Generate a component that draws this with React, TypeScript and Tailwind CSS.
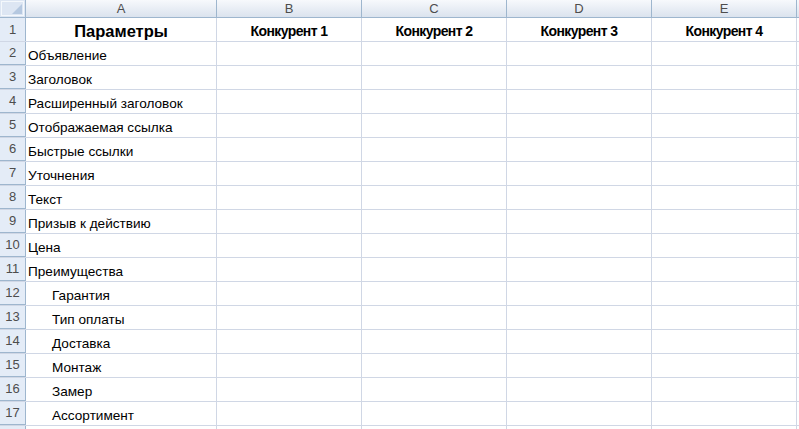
const cols = ["A", "B", "C", "D", "E"];
const widths = ["w-[191px]", "w-[145px]", "w-[145px]", "w-[145px]", "w-[145px]"];

const rows: { label: string; indent?: boolean }[] = [
  { label: "Объявление" },
  { label: "Заголовок" },
  { label: "Расширенный заголовок" },
  { label: "Отображаемая ссылка" },
  { label: "Быстрые ссылки" },
  { label: "Уточнения" },
  { label: "Текст" },
  { label: "Призыв к действию" },
  { label: "Цена" },
  { label: "Преимущества" },
  { label: "Гарантия", indent: true },
  { label: "Тип оплаты", indent: true },
  { label: "Доставка", indent: true },
  { label: "Монтаж", indent: true },
  { label: "Замер", indent: true },
  { label: "Ассортимент", indent: true },
];

function RowHead({ n }: { n?: number }) {
  return (
    <div className="w-[26px] shrink-0 h-full flex items-center justify-center bg-[#e4ecf7] border-r border-[#9eb6ce] text-[13px] text-[#4d4d4d]">
      {n}
    </div>
  );
}

export default function App() {
  return (
    <div className="w-[799px] h-[429px] overflow-hidden bg-white font-['Liberation_Sans',Arial,sans-serif] text-black">
      {/* column headers */}
      <div className="flex h-[18px] border-b border-[#9eb6ce]">
        <div className="w-[26px] shrink-0 relative bg-[#dde6f3] border-r border-[#9eb6ce]">
          <div className="absolute inset-[1px] border border-[#f4f8fc]" />
          <div className="absolute right-[3px] bottom-[3px] w-0 h-0 border-l-[10px] border-l-transparent border-b-[10px] border-b-[#b5c8e0]" />
        </div>
        {cols.map((c, i) => (
          <div
            key={c}
            className={`${widths[i]} shrink-0 flex items-center justify-center bg-gradient-to-b from-[#f7f9fc] to-[#dbe3ee] border-r border-[#9eb6ce] text-[13px] text-[#4d4d4d]`}
          >
            {c}
          </div>
        ))}
        <div className="flex-1 bg-gradient-to-b from-[#f7f9fc] to-[#dbe3ee]" />
      </div>

      {/* row 1 */}
      <div className="flex h-[24px] border-b border-[#d0d7e5]">
        <RowHead n={1} />
        <div className="w-[191px] shrink-0 flex items-end justify-center pb-[2px] border-r border-[#d0d7e5] text-[16.5px] leading-none font-bold">
          Параметры
        </div>
        {[1, 2, 3, 4].map((k) => (
          <div
            key={k}
            className="w-[145px] shrink-0 flex items-end justify-center pb-[3px] border-r border-[#d0d7e5] text-[14px] leading-none font-bold tracking-[-0.6px]"
          >
            Конкурент {k}
          </div>
        ))}
        <div className="flex-1" />
      </div>

      {rows.map((r, i) => (
        <div key={i} className="flex h-[24px] border-b border-[#d0d7e5]">
          <div className="w-[26px] shrink-0 h-full flex items-center justify-center bg-[#e4ecf7] border-r border-[#9eb6ce] border-b border-b-[#9eb6ce] -mb-px text-[13px] text-[#4d4d4d]">
            {i + 2}
          </div>
          <div
            className={`w-[191px] shrink-0 flex items-end pb-[2px] leading-none border-r border-[#d0d7e5] text-[13.6px] ${r.indent ? "pl-[26px]" : "pl-[2px]"}`}
          >
            {r.label}
          </div>
          {[0, 1, 2, 3].map((k) => (
            <div key={k} className="w-[145px] shrink-0 border-r border-[#d0d7e5]" />
          ))}
          <div className="flex-1" />
        </div>
      ))}
      <div className="flex h-[24px]">
        <RowHead />
        <div className="w-[191px] shrink-0 border-r border-[#d0d7e5]" />
        {[0, 1, 2, 3].map((k) => (
          <div key={k} className="w-[145px] shrink-0 border-r border-[#d0d7e5]" />
        ))}
      </div>
    </div>
  );
}
